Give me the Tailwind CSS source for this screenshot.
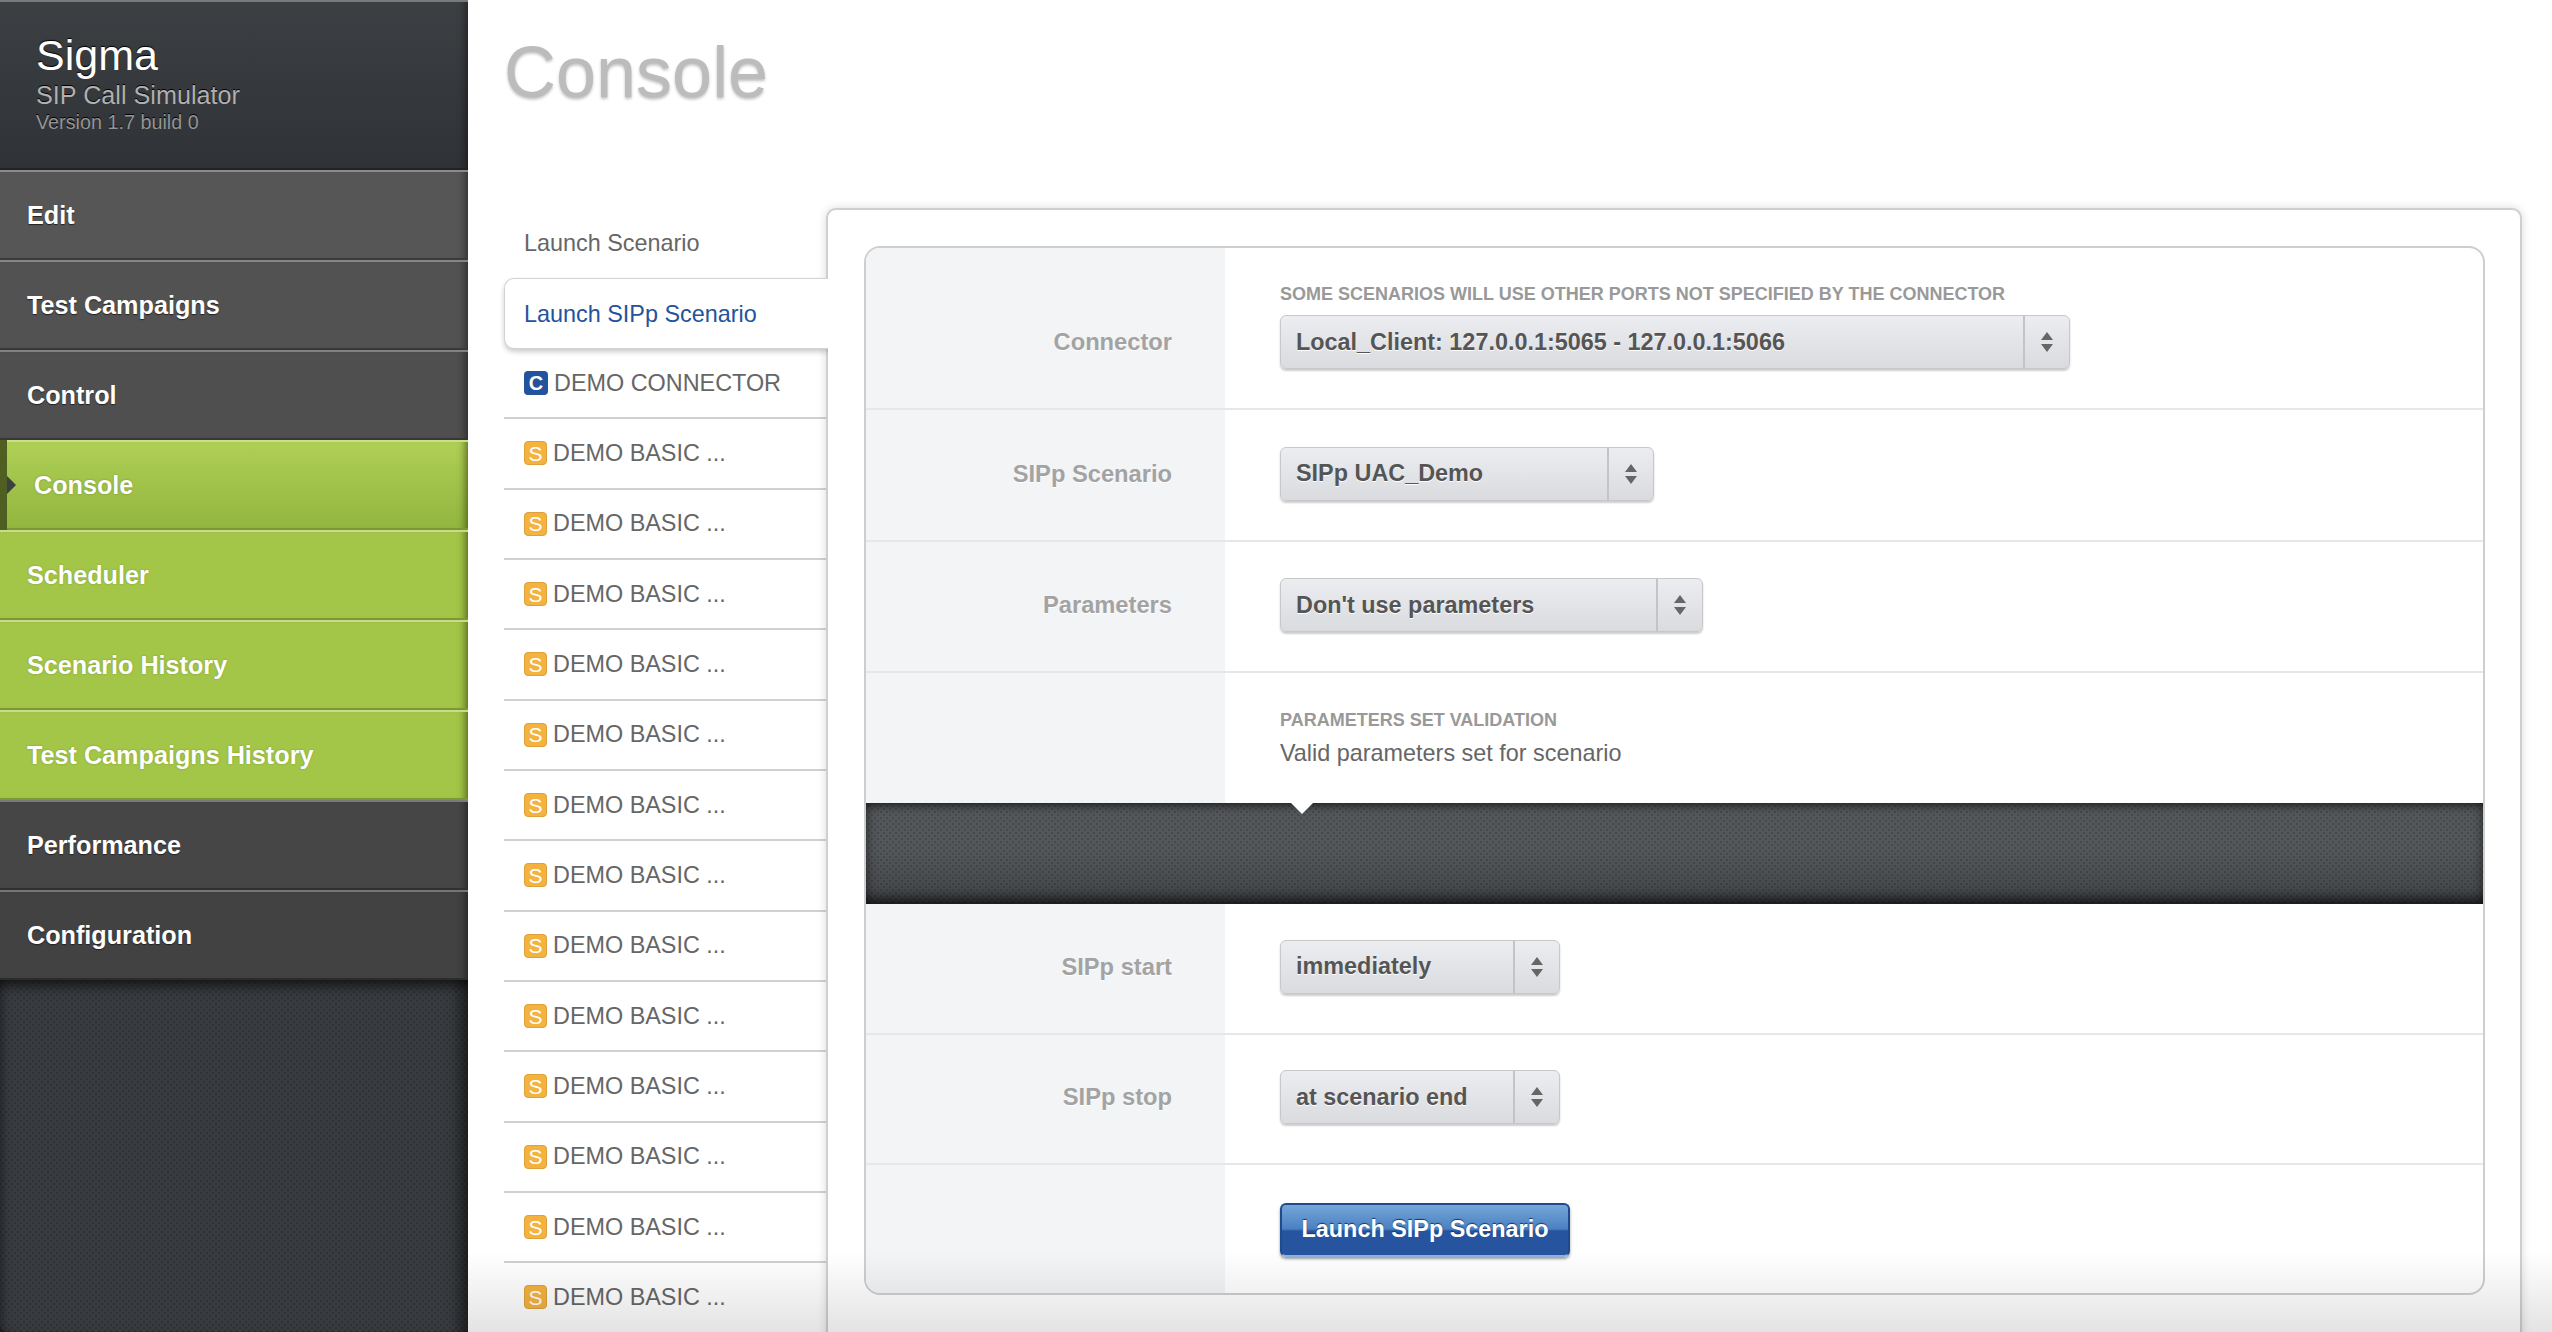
<!DOCTYPE html>
<html lang="en">
<head>
    <meta charset="UTF-8">
    <title>Sigma - Console</title>
    <script src="https://cdn.jsdelivr.net/npm/@tailwindcss/browser@4"></script>
</head>
<body class="bg-white [font-family:'Liberation_Sans',Arial,sans-serif]">
<div class="relative flex w-[2552px] h-[1332px] overflow-hidden">

    <!-- sidebar -->
    <aside class="flex flex-col w-[468px] h-full shrink-0 bg-[#1c1e20]">
        <div class="h-[170px] pl-[36px] pt-[30px] bg-[linear-gradient(#3d4043,#2f3236)] shadow-[inset_0_2px_0_#77797b,inset_0_-2px_0_#222,inset_-8px_0_8px_-6px_rgba(0,0,0,.5)]">
            <div class="text-[43px] leading-[50px] text-white [text-shadow:0_-1px_1px_#000]">Sigma</div>
            <div class="text-[25.2px] leading-[30px] text-[#b0b0b0] [text-shadow:0_-1px_0_#000]">SIP Call Simulator</div>
            <div class="text-[19.8px] leading-[24px] text-[#959595] [text-shadow:0_-1px_0_#000]">Version 1.7 build 0</div>
        </div>
        <nav class="flex flex-col">
            <a class="flex items-center h-[90px] pl-[27px] pt-[1px] text-[25.2px] font-bold text-white bg-[#565656] [text-shadow:0_1px_1px_#222] shadow-[inset_0_2px_0_#8a8a8a,inset_0_-2px_0_#3a3a3a,inset_-8px_0_8px_-6px_rgba(0,0,0,.5)]">Edit</a>
            <a class="flex items-center h-[90px] pl-[27px] pt-[1px] text-[25.2px] font-bold text-white bg-[#525252] [text-shadow:0_1px_1px_#222] shadow-[inset_0_2px_0_#868686,inset_0_-2px_0_#383838,inset_-8px_0_8px_-6px_rgba(0,0,0,.5)]">Test Campaigns</a>
            <a class="flex items-center h-[90px] pl-[27px] pt-[1px] text-[25.2px] font-bold text-white bg-[#4f4f4f] [text-shadow:0_1px_1px_#222] shadow-[inset_0_2px_0_#828282,inset_0_-2px_0_#363636,inset_-8px_0_8px_-6px_rgba(0,0,0,.5)]">Control</a>
            <a class="relative flex items-center h-[90px] pl-[34px] pt-[1px] text-[25.2px] font-bold text-white bg-[linear-gradient(#b0d055,#92b53f)] [text-shadow:0_0_2px_#6f8a2c] shadow-[inset_7px_0_0_#4f5f22,inset_0_2px_0_#c9df8a,inset_0_-2px_0_#7b9833,inset_-8px_0_8px_-6px_rgba(40,50,0,.7)]">
                <span class="absolute left-[7px] top-[36px] w-[9px] h-[18px] bg-[#3d4040] [clip-path:polygon(0_0,100%_50%,0_100%)]"></span>
                Console
            </a>
            <a class="flex items-center h-[90px] pl-[27px] pt-[1px] text-[25.2px] font-bold text-white bg-[#a3c648] [text-shadow:0_0_2px_#7a9632] shadow-[inset_0_2px_0_#c6dc8c,inset_0_-2px_0_#7b9833,inset_-8px_0_8px_-6px_rgba(40,50,0,.7)]">Scheduler</a>
            <a class="flex items-center h-[90px] pl-[27px] pt-[1px] text-[25.2px] font-bold text-white bg-[#a3c648] [text-shadow:0_0_2px_#7a9632] shadow-[inset_0_2px_0_#c6dc8c,inset_0_-2px_0_#7b9833,inset_-8px_0_8px_-6px_rgba(40,50,0,.7)]">Scenario History</a>
            <a class="flex items-center h-[90px] pl-[27px] pt-[1px] text-[25.2px] font-bold text-white bg-[#a3c648] [text-shadow:0_0_2px_#7a9632] shadow-[inset_0_2px_0_#c6dc8c,inset_0_-2px_0_#7b9833,inset_-8px_0_8px_-6px_rgba(40,50,0,.7)]">Test Campaigns History</a>
            <a class="flex items-center h-[90px] pl-[27px] pt-[1px] text-[25.2px] font-bold text-white bg-[#464646] [text-shadow:0_1px_1px_#222] shadow-[inset_0_2px_0_#7a7a7a,inset_0_-2px_0_#303030,inset_-8px_0_8px_-6px_rgba(0,0,0,.5)]">Performance</a>
            <a class="flex items-center h-[90px] pl-[27px] pt-[1px] text-[25.2px] font-bold text-white bg-[#424242] [text-shadow:0_1px_1px_#222] shadow-[inset_0_2px_0_#757575,inset_0_-2px_0_#2c2c2c,inset_-8px_0_8px_-6px_rgba(0,0,0,.5)]">Configuration</a>
        </nav>
        <div class="flex-1 rounded-bl-[8px] bg-[#383b3f] [background-image:radial-gradient(circle,#2f3236_1px,transparent_1.5px),radial-gradient(circle,#2f3236_1px,transparent_1.5px)] [background-size:6px_6px] [background-position:0_0,3px_3px] shadow-[inset_0_14px_12px_-8px_rgba(0,0,0,.6),inset_-16px_0_14px_-8px_rgba(0,0,0,.5),inset_10px_0_10px_-8px_rgba(0,0,0,.35)]"></div>
    </aside>

    <!-- main -->
    <main class="flex-1 pl-[36px]">
        <h1 class="h-[208px] pt-[36px] text-[72px] leading-[72px] text-[#bcbcbc] [text-shadow:0_2px_3px_rgba(0,0,0,.25)]">Console</h1>
        <div class="flex">
            <!-- tabs -->
            <ul class="w-[322px] shrink-0 text-[23.4px] text-[#666]">
                <li class="flex items-center h-[70px] pl-[20px] pt-[2px]">Launch Scenario</li>
                <li class="relative z-10 flex items-center h-[71px] w-[324px] pl-[19px] pt-[2px] bg-white text-[#23539d] border border-r-0 border-[#d2d2d2] rounded-l-[10px] shadow-[0_3px_5px_rgba(0,0,0,.2)] [clip-path:inset(-10px_0_-10px_-10px)]">Launch SIPp Scenario</li>
                <li class="flex items-center gap-[6px] h-[70.33px] pl-[20px] border-b-2 border-[#d0d0d0]"><span class="flex items-center justify-center w-[24px] h-[24px] rounded-[4px] bg-[#23539d] text-[20px] leading-none font-bold text-white">C</span>DEMO CONNECTOR</li>
                <li class="flex items-center gap-[6px] h-[70.33px] pl-[20px] border-b-2 border-[#d0d0d0]"><span class="flex items-center justify-center w-[23px] h-[24px] rounded-[4px] bg-[#f4b23f] border border-[#dda03a] text-[21px] leading-none text-white">S</span>DEMO BASIC ...</li>
                <li class="flex items-center gap-[6px] h-[70.33px] pl-[20px] border-b-2 border-[#d0d0d0]"><span class="flex items-center justify-center w-[23px] h-[24px] rounded-[4px] bg-[#f4b23f] border border-[#dda03a] text-[21px] leading-none text-white">S</span>DEMO BASIC ...</li>
                <li class="flex items-center gap-[6px] h-[70.33px] pl-[20px] border-b-2 border-[#d0d0d0]"><span class="flex items-center justify-center w-[23px] h-[24px] rounded-[4px] bg-[#f4b23f] border border-[#dda03a] text-[21px] leading-none text-white">S</span>DEMO BASIC ...</li>
                <li class="flex items-center gap-[6px] h-[70.33px] pl-[20px] border-b-2 border-[#d0d0d0]"><span class="flex items-center justify-center w-[23px] h-[24px] rounded-[4px] bg-[#f4b23f] border border-[#dda03a] text-[21px] leading-none text-white">S</span>DEMO BASIC ...</li>
                <li class="flex items-center gap-[6px] h-[70.33px] pl-[20px] border-b-2 border-[#d0d0d0]"><span class="flex items-center justify-center w-[23px] h-[24px] rounded-[4px] bg-[#f4b23f] border border-[#dda03a] text-[21px] leading-none text-white">S</span>DEMO BASIC ...</li>
                <li class="flex items-center gap-[6px] h-[70.33px] pl-[20px] border-b-2 border-[#d0d0d0]"><span class="flex items-center justify-center w-[23px] h-[24px] rounded-[4px] bg-[#f4b23f] border border-[#dda03a] text-[21px] leading-none text-white">S</span>DEMO BASIC ...</li>
                <li class="flex items-center gap-[6px] h-[70.33px] pl-[20px] border-b-2 border-[#d0d0d0]"><span class="flex items-center justify-center w-[23px] h-[24px] rounded-[4px] bg-[#f4b23f] border border-[#dda03a] text-[21px] leading-none text-white">S</span>DEMO BASIC ...</li>
                <li class="flex items-center gap-[6px] h-[70.33px] pl-[20px] border-b-2 border-[#d0d0d0]"><span class="flex items-center justify-center w-[23px] h-[24px] rounded-[4px] bg-[#f4b23f] border border-[#dda03a] text-[21px] leading-none text-white">S</span>DEMO BASIC ...</li>
                <li class="flex items-center gap-[6px] h-[70.33px] pl-[20px] border-b-2 border-[#d0d0d0]"><span class="flex items-center justify-center w-[23px] h-[24px] rounded-[4px] bg-[#f4b23f] border border-[#dda03a] text-[21px] leading-none text-white">S</span>DEMO BASIC ...</li>
                <li class="flex items-center gap-[6px] h-[70.33px] pl-[20px] border-b-2 border-[#d0d0d0]"><span class="flex items-center justify-center w-[23px] h-[24px] rounded-[4px] bg-[#f4b23f] border border-[#dda03a] text-[21px] leading-none text-white">S</span>DEMO BASIC ...</li>
                <li class="flex items-center gap-[6px] h-[70.33px] pl-[20px] border-b-2 border-[#d0d0d0]"><span class="flex items-center justify-center w-[23px] h-[24px] rounded-[4px] bg-[#f4b23f] border border-[#dda03a] text-[21px] leading-none text-white">S</span>DEMO BASIC ...</li>
                <li class="flex items-center gap-[6px] h-[70.33px] pl-[20px] border-b-2 border-[#d0d0d0]"><span class="flex items-center justify-center w-[23px] h-[24px] rounded-[4px] bg-[#f4b23f] border border-[#dda03a] text-[21px] leading-none text-white">S</span>DEMO BASIC ...</li>
                <li class="flex items-center gap-[6px] h-[70.33px] pl-[20px] border-b-2 border-[#d0d0d0]"><span class="flex items-center justify-center w-[23px] h-[24px] rounded-[4px] bg-[#f4b23f] border border-[#dda03a] text-[21px] leading-none text-white">S</span>DEMO BASIC ...</li>
            </ul>

            <!-- panel -->
            <section class="w-[1696px] h-[1200px] shrink-0 pl-[36px] pt-[36px] bg-white border-2 border-[#cfcfcf] rounded-[10px] shadow-[0_0_10px_rgba(0,0,0,.15)]">
                <div class="w-[1621px] overflow-hidden border-2 border-[#cecece] rounded-[16px] bg-white">
                    <!-- connector -->
                    <div class="flex border-b-2 border-[#e6e7e9]">
                        <div class="flex items-end justify-end w-[359px] pr-[53px] pb-[39px] bg-[#f3f4f6]">
                            <label class="flex items-center h-[54px] pt-[2px] text-[23.7px] font-bold text-[#a3a3a3] [text-shadow:0_1px_0_#fff]">Connector</label>
                        </div>
                        <div class="pl-[55px] pt-[33px] pb-[39px]">
                            <p class="h-[34px] pt-[1px] text-[18px] leading-[24px] font-bold text-[#999] uppercase">Some scenarios will use other ports not specified by the connector</p>
                            <div class="flex w-[790px] h-[54px] rounded-[6px] border border-[#c8c8c8] bg-[linear-gradient(#ecedf0,#d9dbdf)] shadow-[0_2px_2px_rgba(0,0,0,.2)]">
                                <span class="flex-1 flex items-center pl-[15px] pt-[1px] text-[23.4px] font-bold text-[#555] [text-shadow:0_1px_0_#fff]">Local_Client: 127.0.0.1:5065 - 127.0.0.1:5066</span>
                                <span class="flex items-center justify-center w-[46px] border-l-2 border-[#c4c4c4]"><svg width="12" height="20" viewBox="0 0 12 20"><path d="M6 0l6 8H0zM6 20l-6-8h12z" fill="#666"/></svg></span>
                            </div>
                        </div>
                    </div>
                    <!-- scenario -->
                    <div class="flex border-b-2 border-[#e6e7e9]">
                        <div class="flex items-center justify-end w-[359px] pr-[53px] pt-[37px] pb-[39px] bg-[#f3f4f6]">
                            <label class="flex items-center h-[54px] pt-[2px] text-[23.7px] font-bold text-[#a3a3a3] [text-shadow:0_1px_0_#fff]">SIPp Scenario</label>
                        </div>
                        <div class="pl-[55px] pt-[37px] pb-[39px]">
                            <div class="flex w-[374px] h-[54px] rounded-[6px] border border-[#c8c8c8] bg-[linear-gradient(#ecedf0,#d9dbdf)] shadow-[0_2px_2px_rgba(0,0,0,.2)]">
                                <span class="flex-1 flex items-center pl-[15px] text-[23.4px] font-bold text-[#555] [text-shadow:0_1px_0_#fff]">SIPp UAC_Demo</span>
                                <span class="flex items-center justify-center w-[46px] border-l-2 border-[#c4c4c4]"><svg width="12" height="20" viewBox="0 0 12 20"><path d="M6 0l6 8H0zM6 20l-6-8h12z" fill="#666"/></svg></span>
                            </div>
                        </div>
                    </div>
                    <!-- parameters -->
                    <div class="flex border-b-2 border-[#e6e7e9]">
                        <div class="flex items-center justify-end w-[359px] pr-[53px] pt-[36px] pb-[39px] bg-[#f3f4f6]">
                            <label class="flex items-center h-[54px] pt-[2px] text-[23.7px] font-bold text-[#a3a3a3] [text-shadow:0_1px_0_#fff]">Parameters</label>
                        </div>
                        <div class="pl-[55px] pt-[36px] pb-[39px]">
                            <div class="flex w-[423px] h-[54px] rounded-[6px] border border-[#c8c8c8] bg-[linear-gradient(#ecedf0,#d9dbdf)] shadow-[0_2px_2px_rgba(0,0,0,.2)]">
                                <span class="flex-1 flex items-center pl-[15px] pt-[1px] text-[23.4px] font-bold text-[#555] [text-shadow:0_1px_0_#fff]">Don't use parameters</span>
                                <span class="flex items-center justify-center w-[46px] border-l-2 border-[#c4c4c4]"><svg width="12" height="20" viewBox="0 0 12 20"><path d="M6 0l6 8H0zM6 20l-6-8h12z" fill="#666"/></svg></span>
                            </div>
                        </div>
                    </div>
                    <!-- validation -->
                    <div class="flex h-[130px]">
                        <div class="w-[359px] bg-[#f3f4f6]"></div>
                        <div class="pl-[55px] pt-[35px]">
                            <p class="h-[30px] text-[18px] leading-[24px] font-bold text-[#999] uppercase">Parameters set validation</p>
                            <p class="text-[23.4px] leading-[30px] text-[#666]">Valid parameters set for scenario</p>
                        </div>
                    </div>
                    <!-- dark strip -->
                    <div class="relative h-[101px] bg-[#54575a] [background-image:linear-gradient(rgba(0,0,0,0)_45%,rgba(0,0,0,.22)),radial-gradient(circle,#46494c_1px,transparent_1.5px),radial-gradient(circle,#46494c_1px,transparent_1.5px)] [background-size:100%_100%,6px_6px,6px_6px] [background-position:0_0,0_0,3px_3px] shadow-[inset_0_10px_8px_-7px_rgba(0,0,0,.6),inset_0_-14px_12px_-8px_rgba(0,0,0,.65),inset_10px_0_10px_-8px_rgba(0,0,0,.35),inset_-10px_0_10px_-8px_rgba(0,0,0,.35)]">
                        <span class="absolute left-[425px] top-0 w-[22px] h-[11px] bg-white [clip-path:polygon(0_0,100%_0,50%_100%)]"></span>
                    </div>
                    <!-- start -->
                    <div class="flex border-b-2 border-[#e6e7e9]">
                        <div class="flex items-center justify-end w-[359px] pr-[53px] pt-[36px] pb-[39px] bg-[#f3f4f6]">
                            <label class="flex items-center h-[54px] pt-[2px] text-[23.7px] font-bold text-[#a3a3a3] [text-shadow:0_1px_0_#fff]">SIPp start</label>
                        </div>
                        <div class="pl-[55px] pt-[36px] pb-[39px]">
                            <div class="flex w-[280px] h-[54px] rounded-[6px] border border-[#c8c8c8] bg-[linear-gradient(#ecedf0,#d9dbdf)] shadow-[0_2px_2px_rgba(0,0,0,.2)]">
                                <span class="flex-1 flex items-center pl-[15px] text-[23.4px] font-bold text-[#555] [text-shadow:0_1px_0_#fff]">immediately</span>
                                <span class="flex items-center justify-center w-[46px] border-l-2 border-[#c4c4c4]"><svg width="12" height="20" viewBox="0 0 12 20"><path d="M6 0l6 8H0zM6 20l-6-8h12z" fill="#666"/></svg></span>
                            </div>
                        </div>
                    </div>
                    <!-- stop -->
                    <div class="flex border-b-2 border-[#e6e7e9]">
                        <div class="flex items-center justify-end w-[359px] pr-[53px] pt-[35px] pb-[39px] bg-[#f3f4f6]">
                            <label class="flex items-center h-[54px] pt-[2px] text-[23.7px] font-bold text-[#a3a3a3] [text-shadow:0_1px_0_#fff]">SIPp stop</label>
                        </div>
                        <div class="pl-[55px] pt-[35px] pb-[39px]">
                            <div class="flex w-[280px] h-[54px] rounded-[6px] border border-[#c8c8c8] bg-[linear-gradient(#ecedf0,#d9dbdf)] shadow-[0_2px_2px_rgba(0,0,0,.2)]">
                                <span class="flex-1 flex items-center pl-[15px] pt-[1px] text-[23.4px] font-bold text-[#555] [text-shadow:0_1px_0_#fff]">at scenario end</span>
                                <span class="flex items-center justify-center w-[46px] border-l-2 border-[#c4c4c4]"><svg width="12" height="20" viewBox="0 0 12 20"><path d="M6 0l6 8H0zM6 20l-6-8h12z" fill="#666"/></svg></span>
                            </div>
                        </div>
                    </div>
                    <!-- submit -->
                    <div class="flex">
                        <div class="w-[359px] bg-[#f3f4f6]"></div>
                        <div class="pl-[55px] pt-[38px] pb-[36px]">
                            <button class="w-[290px] h-[54px] rounded-[6px] border-2 border-[#1f4a8d] border-b-[#8fb2de] text-[23.4px] font-bold text-white bg-[linear-gradient(#76a7d8_0%,#4a80c2_48%,#26549f_52%,#26549f_100%)] [text-shadow:0_-1px_1px_#143668] shadow-[0_2px_3px_rgba(0,0,0,.4)]">Launch SIPp Scenario</button>
                        </div>
                    </div>
                </div>
            </section>
        </div>
    </main>

    <!-- bottom fade over the content -->
    <div class="absolute left-[468px] right-0 bottom-0 h-[80px] pointer-events-none bg-[linear-gradient(rgba(0,0,0,0),rgba(0,0,0,.11))]"></div>
</div>
</body>
</html>
